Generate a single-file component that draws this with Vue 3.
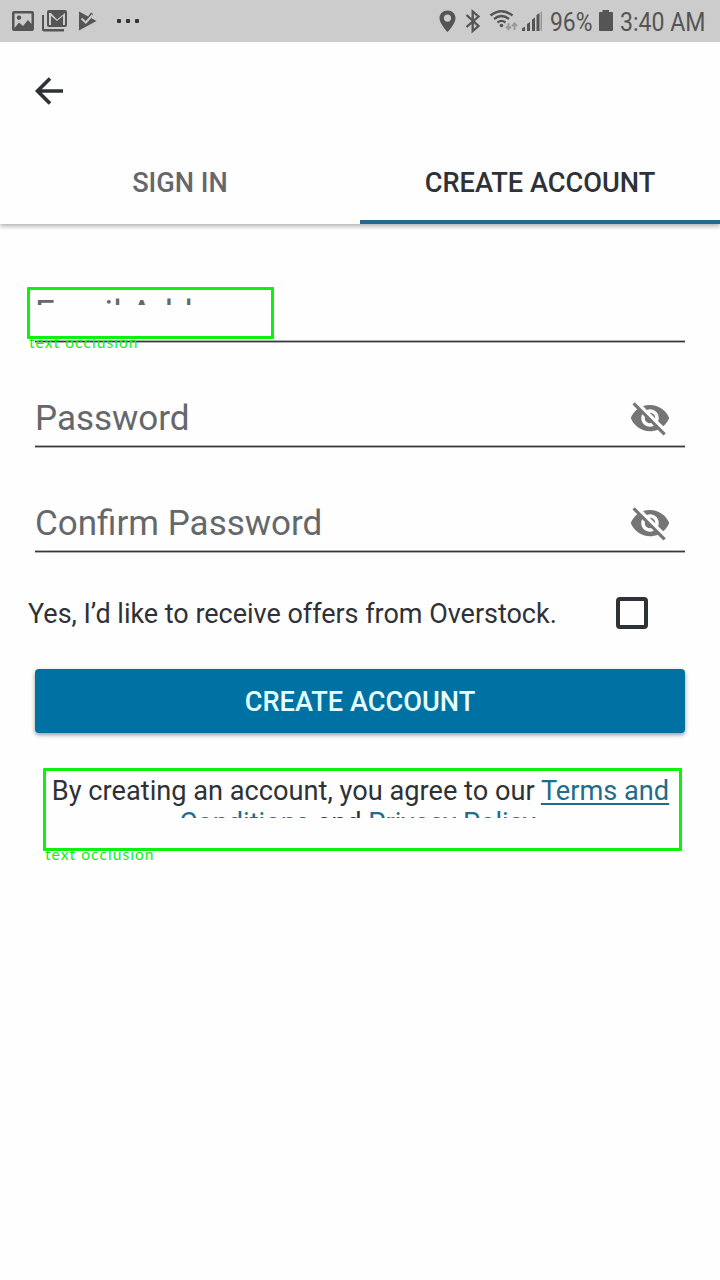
<script setup>
import { ref } from 'vue'

const tabs = ['SIGN IN', 'CREATE ACCOUNT']
const active = ref(1)
const fields = ['Email Address', 'Password', 'Confirm Password']
</script>

<template>
  <main class="screen">
    <header class="status">
      <svg width="720" height="42" viewBox="0 0 720 42">
        <g fill="#555">
          <path fill-rule="evenodd" d="M14 11h18q2 0 2 2v16q0 2-2 2H14q-2 0-2-2V13q0-2 2-2zm.5 2.500v14.500l4.500-5.500 4 3.500 5-6 3.500 4V13.500zM19 15.500a2.200 2.200 0 1 1-.01 0z" />
          <path fill-rule="evenodd" d="M49 10h16q2 0 2 2v13q0 2-2 2H49q-2 0-2-2V12q0-2 2-2zm0 3v12h2V16l6 5 6-5v9h2V13l-8 6.500-6-6.500z" />
          <path d="M42 15h2v14h20v2.500H44q-2 0-2-2z" />
          <path d="M79 11.500L96.500 21 79 30.500zM91 12.500l2 1.500-2 5-4-1z" />
          <path fill-rule="evenodd" d="M447.500 10.500c-4.600 0-8 3.300-8 7.700 0 5.700 8 13.800 8 13.800s8-8.100 8-13.800c0-4.400-3.400-7.700-8-7.700zm0 4a3.600 3.600 0 1 1 0 7.200 3.600 3.600 0 0 1 0-7.200z" />
          <circle cx="501.500" cy="25.500" r="1.800" />
          <path d="M522 31v-2.500l3-2V31zM527 31v-7l3-2v9zM532 31V19.500l3-2V31zM536.500 31V15l3-2v18z" />
          <path d="M600 12h2.500v-2h6.500v2h3q1 0 1 1v17q0 1-1 1h-12q-1 0-1-1V13q0-1 1-1z" />
        </g>
        <path fill="none" stroke="#ccc" stroke-width="2" d="M81.500 18.500l4.300 4 6.700-7.500" />
        <path fill="#999" d="M540.500 12.500l1.500-1.500v20h-1.500z" />
        <g fill="none" stroke="#555" stroke-width="2.300">
          <path d="M466.500 15l12 11-5.800 5V11.500l5.800 5-12 10.500" />
          <path d="M490.500 15.500q11-8.500 22 0M494 19q7.500-6 15 0M497.500 22.500q4-3.200 8 0" />
        </g>
        <g fill="none" stroke="#999" stroke-width="2"><path d="M508.500 23v6M506 26.500l2.500 2.500 2.500-2.500M514.500 30v-6M512 26l2.500-2.500L517 26" /></g>
        <g fill="#333"><rect x="117" y="19" width="4" height="4" rx="1" /><rect x="126" y="19" width="4" height="4" rx="1" /><rect x="135" y="19" width="4" height="4" rx="1" /></g>
        <g class="status-text">
          <text x="550" y="31" textLength="42.500" lengthAdjust="spacingAndGlyphs">96%</text>
          <text x="620" y="31" textLength="85.500" lengthAdjust="spacingAndGlyphs">3:40 AM</text>
        </g>
      </svg>
    </header>

    <div class="toolbar">
      <svg width="30" height="30" viewBox="0 0 30 30" fill="none" stroke="#2e3236" stroke-width="3.600"><path d="M29 15H4M16 2.500L3.500 15 16 27.500" /></svg>
    </div>

    <nav class="tabs">
      <button v-for="(tab, i) in tabs" :key="tab" class="tab" :class="{ on: i === active }" @click="active = i"><span>{{ tab }}</span></button>
    </nav>

    <form class="form" @submit.prevent>
      <div v-for="(field, i) in fields" :key="field" class="field">
        <span class="hint" :class="{ cut: i === 0 }">{{ field }}</span>
        <svg v-if="i" class="eye" width="42" height="42" viewBox="0 0 24 24" fill="#757575"><path d="M12 7c2.760 0 5 2.240 5 5 0 .65-.13 1.260-.36 1.830l2.920 2.920c1.510-1.260 2.700-2.890 3.430-4.750-1.730-4.390-6-7.500-11-7.500-1.400 0-2.740.25-3.980.7l2.160 2.160C10.740 7.130 11.350 7 12 7zM2 4.270l2.280 2.280.46.46C3.080 8.300 1.780 10.020 1 12c1.730 4.390 6 7.500 11 7.500 1.550 0 3.030-.3 4.380-.84l.42.42L19.730 22 21 20.730 3.270 3 2 4.270zM7.530 9.800l1.550 1.550c-.05.21-.08.43-.08.65 0 1.660 1.340 3 3 3 .22 0 .44-.03.65-.08l1.550 1.550c-.67.33-1.410.53-2.200.53-2.760 0-5-2.240-5-5 0-.79.2-1.530.53-2.200zm4.310-.78l3.150 3.150.02-.16c0-1.660-1.340-3-3-3l-.17.010z" /></svg>
        <div v-if="!i" class="mark mark-email"><span>text occlusion</span></div>
      </div>
      <div class="offers"><span class="offers-text">Yes, I’d like to receive offers from Overstock.</span><i class="box"></i></div>
      <button class="submit"><span>CREATE ACCOUNT</span></button>
      <div class="legal">
        <p>By creating an account, you agree to our <a>Terms and</a><br><a>Conditions</a> and <a>Privacy Policy</a>.</p>
        <div class="mark mark-legal"><span>text occlusion</span></div>
      </div>
    </form>
  </main>
</template>

<style>
body { margin: 0; background: #fefefe; }
</style>

<style scoped>
.screen { width: 720px; height: 1280px; overflow: hidden; background: #fefefe; color: #2e3236; font-family: Roboto, sans-serif; font-size: 28px; }
.status { height: 42px; background: #ccc; }
.status svg, .toolbar svg { display: block; }
.status-text { fill: #555; font: 26px Roboto, sans-serif; }
.toolbar { height: 100px; padding: 34px 0 0 34px; box-sizing: border-box; }
button { border: 0; padding: 2px 0 0; font: 500 27.200px/32px Roboto, sans-serif; background: none; }
.tabs { height: 82px; display: flex; box-shadow: 0 2px 5px #0005; clip-path: inset(0 0 -12px 0); }
.tab { flex: 1; padding-top: 4px; color: #65686b; border-bottom: 4px solid transparent; }
.tab.on { color: #2e3236; border-color: #216c8c; }
.form { display: flex; flex-direction: column; padding: 13px 35px 0; }
.field { position: relative; height: 105px; box-sizing: border-box; border-bottom: 1px solid #36383c; box-shadow: 0 1px #b0b1b3, inset 0 -1px #b0b1b3; display: flex; justify-content: space-between; align-items: flex-end; padding: 0 14px 6px 0; }
.hint { font-size: 35px; line-height: 42px; color: #65686b; }
.cut { clip-path: inset(0 0 30px 0); }
.eye { margin-bottom: 1px; }
.mark { position: absolute; box-sizing: border-box; border: 3px solid #0df20d; border-radius: 1px; }
.mark span { position: absolute; left: -1px; top: 100%; margin-top: -2px; font: 400 15.500px/16px Lato, sans-serif; letter-spacing: 1.080px; color: #0df20d; white-space: pre; }
.mark-email { left: -8px; top: 50px; width: 247px; height: 52px; }
.mark-legal { left: 9px; top: -1px; width: 639px; height: 83px; }
.offers { height: 117px; display: flex; align-items: center; justify-content: space-between; margin: 3px 37px 0 -7px; }
.offers-text { font-size: 27px; letter-spacing: -0.020px; white-space: nowrap; }
.box { width: 32px; height: 32px; box-sizing: border-box; border: 4px solid #2e3236; border-radius: 4px; margin-top: -2px; }
.submit { height: 64px; border-radius: 4px; background: #0071a3; color: #e6ffff; box-shadow: 0 2px 4px #0006; margin-top: -3px; }
.legal { position: relative; height: 84px; margin: 36px -1px 0; }
p { margin: 6px -1px 0 0; font-size: 27.200px; line-height: 32px; text-align: center; white-space: nowrap; height: 43px; overflow: hidden; }
a { color: #216c8c; text-decoration: underline; text-decoration-thickness: 2px; text-underline-offset: 3px; }
</style>
